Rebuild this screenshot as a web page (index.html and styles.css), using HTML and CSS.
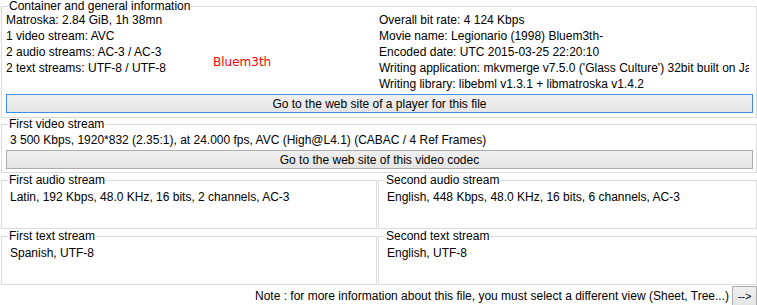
FILE: index.html
```html
<!DOCTYPE html>
<html lang="en">
<head>
  <meta charset="UTF-8">
  <title>MediaInfo - Easy view</title>
  <link rel="stylesheet" href="styles.css">
</head>
<body>
  <div class="info">
    <!-- Container -->
    <fieldset class="group general">
      <legend>Container and general information</legend>
      <span class="tag">Bluem3th</span>
      <div class="cols">
        <div class="col left">
          <div>Matroska: 2.84 GiB, 1h 38mn</div>
          <div>1 video stream: AVC</div>
          <div>2 audio streams: AC-3 / AC-3</div>
          <div>2 text streams: UTF-8 / UTF-8</div>
        </div>
        <div class="col right">
          <div>Overall bit rate: 4 124 Kbps</div>
          <div>Movie name: Legionario (1998) Bluem3th-</div>
          <div>Encoded date: UTC 2015-03-25 22:20:10</div>
          <div>Writing application: mkvmerge v7.5.0 ('Glass Culture') 32bit built on Jan  4 2015</div>
          <div>Writing library: libebml v1.3.1 + libmatroska v1.4.2</div>
        </div>
      </div>
      <button class="link focused">Go to the web site of a player for this file</button>
    </fieldset>

    <!-- Video -->
    <fieldset class="group video">
      <legend>First video stream</legend>
      <div class="line">3 500 Kbps, 1920*832 (2.35:1), at 24.000 fps, AVC (High@L4.1) (CABAC / 4 Ref Frames)</div>
      <button class="link">Go to the web site of this video codec</button>
    </fieldset>

    <!-- Audio -->
    <div class="pair">
      <fieldset class="group small">
        <legend>First audio stream</legend>
        <div class="line">Latin, 192 Kbps, 48.0 KHz, 16 bits, 2 channels, AC-3</div>
      </fieldset>
      <fieldset class="group small">
        <legend>Second audio stream</legend>
        <div class="line">English, 448 Kbps, 48.0 KHz, 16 bits, 6 channels, AC-3</div>
      </fieldset>
    </div>

    <!-- Text -->
    <div class="pair">
      <fieldset class="group small">
        <legend>First text stream</legend>
        <div class="line">Spanish, UTF-8</div>
      </fieldset>
      <fieldset class="group small">
        <legend>Second text stream</legend>
        <div class="line">English, UTF-8</div>
      </fieldset>
    </div>

    <div class="note">
      <span>Note : for more information about this file, you must select a different view (Sheet, Tree...)</span>
      <button class="next">--&gt;</button>
    </div>
  </div>
</body>
</html>
```

FILE: styles.css
```css
/* General Layout */
body {
  font-family: "Liberation Sans", Arial, sans-serif;
  font-size: 12px;
  color: #000;
  background: #fff;
  margin: 0;
  padding: 0;
  width: 757px;
  height: 305px;
  overflow: hidden;
}

.info {
  padding: 1px 0 0 1px;
  width: 756px;
}

.group {
  margin: 0;
  border: 1px solid #dcdcdc;
  padding: 0 3px 3px 4px;
  min-width: 0;
}

.group legend {
  line-height: 11px;
  margin-left: 2px;
  padding: 0 1px;
}

.line {
  line-height: 16px;
  padding-left: 4px;
  white-space: nowrap;
}

/* Container box */
.general {
  position: relative;
  padding-bottom: 4px;
}

.cols {
  display: flex;
  line-height: 16px;
}

.col div {
  white-space: nowrap;
}

.left {
  width: 373px;
}

.right {
  width: 370px;
  overflow: hidden;
}

.tag {
  position: absolute;
  left: 211px;
  top: 43px;
  font-family: "DejaVu Sans", sans-serif;
  font-size: 12px;
  color: #f00;
}

.link {
  display: block;
  width: 100%;
  height: 19px;
  margin-top: 2px;
  padding: 0;
  font-family: inherit;
  font-size: 12px;
  color: #000;
  border: 1px solid #adadad;
  background: linear-gradient(#f0f0f0, #e5e5e5);
}

.focused {
  border-color: #3c8fe8;
}

/* Video box */
.video {
  margin-top: 1px;
  padding-top: 2px;
}

/* Stream pairs */
.pair {
  display: flex;
  gap: 1px;
  margin-top: 2px;
}

.small {
  box-sizing: border-box;
  padding-top: 3px;
  padding-bottom: 23px;
}

.pair .small:first-child {
  width: 376px;
  flex: none;
}

.pair .small:last-child {
  flex: 1;
}

/* Footer note */
.note {
  display: flex;
  justify-content: flex-end;
  align-items: center;
  gap: 3px;
  margin-top: 1px;
  height: 20px;
}

.next {
  width: 25px;
  height: 20px;
  padding: 0;
  font-family: inherit;
  font-size: 11px;
  color: #000;
  border: 1px solid #adadad;
  background: linear-gradient(#f0f0f0, #e5e5e5);
}
```
